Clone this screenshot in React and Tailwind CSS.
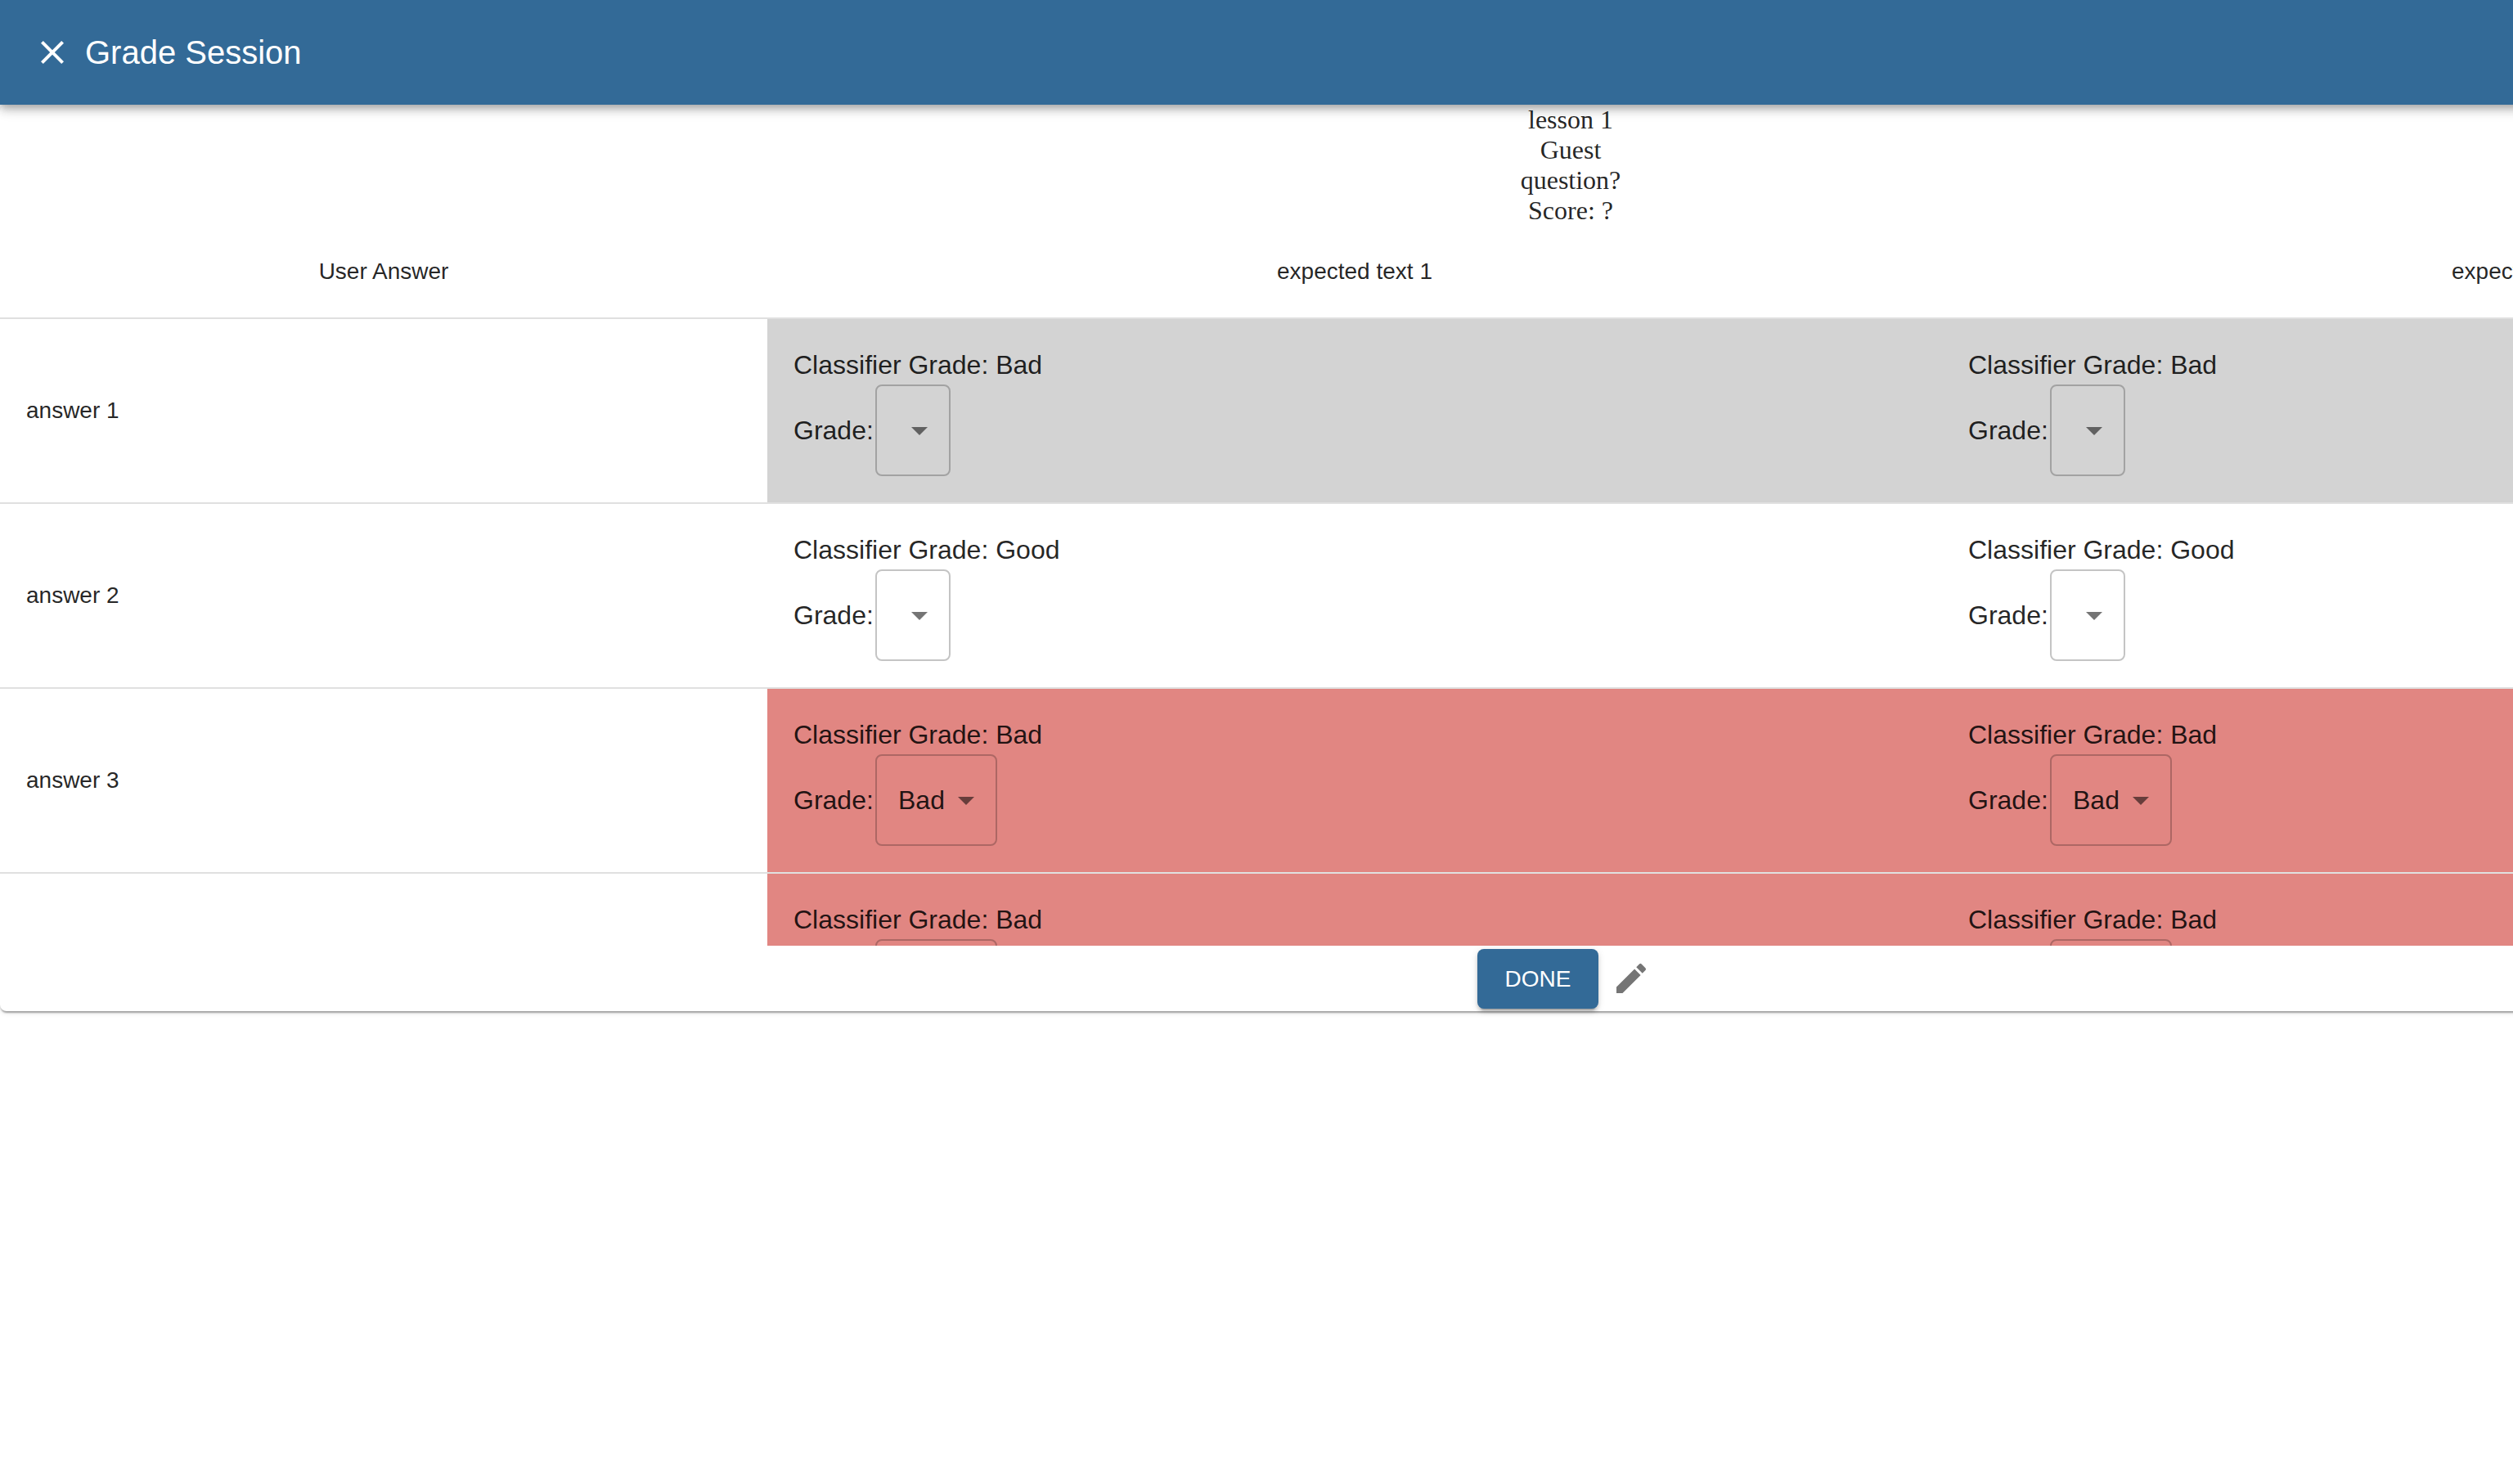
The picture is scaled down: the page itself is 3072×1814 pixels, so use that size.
import React from "react";

const rows = [
  { answer: "answer 1", classifier: "Bad", grade: "", tone: "bg-[#d3d3d3]" },
  { answer: "answer 2", classifier: "Good", grade: "", tone: "bg-white" },
  { answer: "answer 3", classifier: "Bad", grade: "Bad", tone: "bg-[#e18682]" },
  { answer: "answer 4", classifier: "Bad", grade: "Bad", tone: "bg-[#e18682]" },
];

const expectations = ["expected text 1", "expected text 2"];

function GradeCell({ id, row }) {
  return (
    <td className={`border-b-2 border-[#e0e0e0] p-8 text-[32px] leading-[48px] ${row.tone}`}>
      <p>Classifier Grade: {row.classifier}</p>
      <div className="flex items-center">
        <label htmlFor={id} className="w-[100px]">
          Grade:
        </label>
        <div className="relative">
          <select
            id={id}
            defaultValue={row.grade}
            className="block h-28 appearance-none rounded-lg border-2 border-black/23 bg-transparent pr-[62px] pl-[26px] field-sizing-content"
          >
            <option value=""></option>
            <option value="Good">Good</option>
            <option value="Bad">Bad</option>
          </select>
          <svg
            viewBox="0 0 24 24"
            aria-hidden="true"
            className="pointer-events-none absolute top-8 right-3.5 size-12 fill-black/54"
          >
            <path d="M7 10l5 5 5-5z" />
          </svg>
        </div>
      </div>
    </td>
  );
}

export default function App() {
  return (
    <div className="min-h-screen overflow-hidden bg-white font-['Liberation_Sans',Arial,sans-serif] text-black/87">
      <div className="w-[125%]">
        <header className="relative z-10 flex h-32 items-center bg-[#336a97] px-6 text-white shadow-[0_4px_8px_-2px_rgba(0,0,0,0.2),0_8px_10px_0_rgba(0,0,0,0.14),0_2px_20px_0_rgba(0,0,0,0.12)]">
          <button type="button" aria-label="Close" className="p-4">
            <svg viewBox="0 0 24 24" className="size-12 fill-current">
              <path d="M19 6.41L17.59 5 12 10.59 6.41 5 5 6.41 10.59 12 5 17.59 6.41 19 12 13.41 17.59 19 19 17.59 13.41 12z" />
            </svg>
          </button>
          <h1 className="text-[40px] leading-[64px]">Grade Session</h1>
        </header>

        <main className="rounded-lg bg-white shadow-[0_4px_2px_-2px_rgba(0,0,0,0.2),0_2px_2px_0_rgba(0,0,0,0.14),0_2px_6px_0_rgba(0,0,0,0.12)]">
          <div className="text-center font-['Liberation_Serif','Times_New_Roman',serif] text-[32px] leading-[37px]">
            <div>lesson 1</div>
            <div>Guest</div>
            <div>question?</div>
            <div>Score: ?</div>
          </div>

          <div className="max-h-[880px] overflow-hidden pr-[30px]">
            <table className="w-full table-fixed border-separate border-spacing-0 text-[28px] leading-[48px]">
              <thead>
                <tr>
                  <th scope="col" className="w-[938px] border-b-2 border-[#e0e0e0] p-8 text-center font-normal">
                    User Answer
                  </th>
                  {expectations.map((text) => (
                    <th key={text} scope="col" className="border-b-2 border-[#e0e0e0] p-8 text-center font-normal">
                      {text}
                    </th>
                  ))}
                </tr>
              </thead>
              <tbody>
                {rows.map((row, r) => (
                  <tr key={row.answer}>
                    <td className="border-b-2 border-[#e0e0e0] p-8">{row.answer}</td>
                    {expectations.map((text, c) => (
                      <GradeCell key={text} id={`grade-${r}-${c}`} row={row} />
                    ))}
                  </tr>
                ))}
              </tbody>
            </table>
          </div>

          <div className="flex items-start justify-center">
            <button
              type="button"
              className="mt-1 min-w-[148px] rounded-lg bg-[#336a97] px-8 py-3 text-[28px] leading-[49px] text-white shadow-[0_6px_2px_-4px_rgba(0,0,0,0.2),0_4px_4px_0_rgba(0,0,0,0.14),0_2px_10px_0_rgba(0,0,0,0.12)]"
            >
              DONE
            </button>
            <button type="button" aria-label="Edit" className="p-4">
              <svg viewBox="0 0 24 24" className="size-12 fill-black/54">
                <path d="M3 17.25V21h3.75L17.81 9.94l-3.75-3.75L3 17.25zM20.71 7.04c.39-.39.39-1.02 0-1.41l-2.34-2.34a.9959.9959 0 0 0-1.41 0l-1.83 1.83 3.75 3.75 1.83-1.83z" />
              </svg>
            </button>
          </div>
        </main>
      </div>
    </div>
  );
}
